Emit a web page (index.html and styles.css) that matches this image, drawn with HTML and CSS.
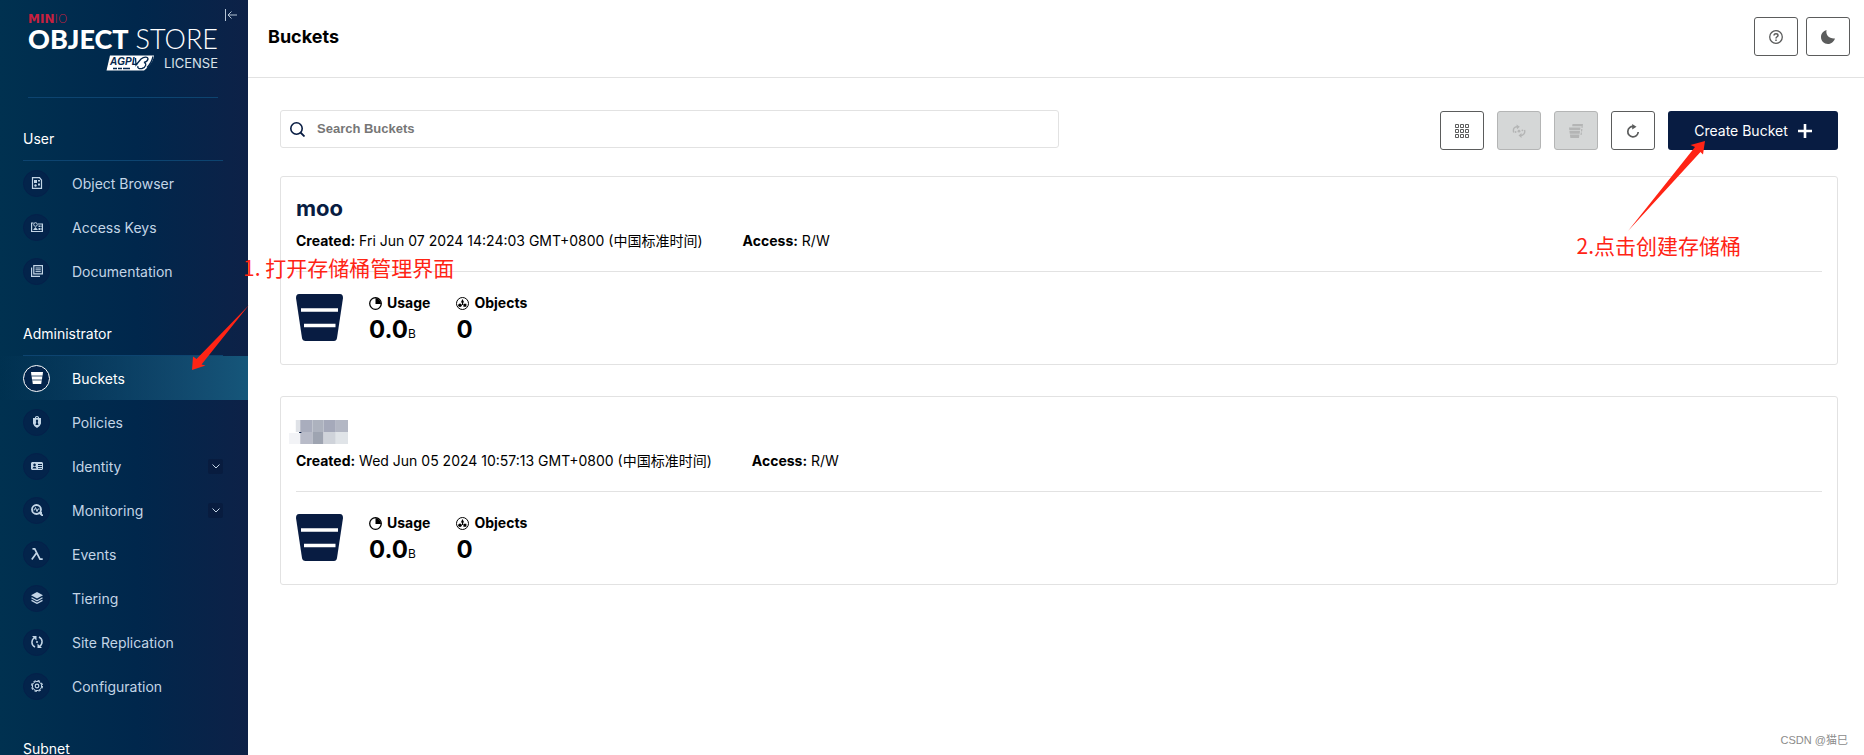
FILE: index.html
```html
<!DOCTYPE html>
<html lang="en">
<head>
<meta charset="utf-8">
<title>Buckets</title>
<link rel="stylesheet" href="styles.css">
</head>
<body>
<div class="app">
  <aside class="sidebar">
    <button class="collapse" aria-label="Collapse menu"><svg viewBox="0 0 12 12" width="12" height="12" fill="none" stroke="currentColor"><path d="M.5 0v12M12 6H3M6.500 2.500 3 6l3.500 3.500"/></svg></button>
    <div class="brand">
      <div class="brand-min"><b>MIN</b>IO</div>
      <div class="brand-name"><b>OBJECT</b><span>STORE</span></div>
      <div class="brand-license">
        <svg class="agpl" viewBox="0 0 49 16" width="49" height="16" aria-hidden="true">
          <path d="M4 .5h44c-.5 5-4 10-10 15H.5z" fill="#fff"/>
          <text x="4" y="10" class="agpl-text">AGPL</text>
          <path d="M7 13.500h4m1 0h4m1 0h7" stroke="#04264c" stroke-width="1.500"/>
          <path d="M29.500 3l.5 7 5-6c3-2.500 7-2.500 7 0-.5 2-2 3-4 3.500 3 .5 2 5-2 6-3 .5-5-.5-4-2.500M41 12.500c3-3 5-6 6-11" fill="none" stroke="#04264c" stroke-width="1.300"/>
        </svg>
        <span>LICENSE</span>
      </div>
    </div>
    <nav>
      <h2 class="group">User</h2>
      <a class="item" href="#"><span class="dot"><svg viewBox="0 0 12 12"><path d="M1.500.6h7L10.500 3v8.400h-9z" fill="none" stroke="currentColor" stroke-width="1.200"/><path d="M3 3h3v3H3zM7 6.500h2v2H7zM7 3h2v1.500H7z"/><circle cx="4.500" cy="8.500" r="1.200"/></svg></span>Object Browser</a>
      <a class="item" href="#"><span class="dot"><svg viewBox="0 0 12 12"><path d="M2.500 2H.6v8.500h10.800V3H7" fill="none" stroke="currentColor" stroke-width="1.200"/><circle cx="4.500" cy="3.500" r="1.800" fill="none" stroke="currentColor"/><path d="M2 9l2.500-3L7 9zM7.500 4.500H9V6H7.500zM9.500 4.500h1V6h-1zM7.500 7H9v2H7.500zM9.500 7h1v2h-1z"/></svg></span>Access Keys</a>
      <a class="item" href="#"><span class="dot"><svg viewBox="0 0 12 12" fill="none" stroke="currentColor"><path d="M2.800.6h8.600v8.200H2.800zM.6 2.500v8.900H9" stroke-width="1.200"/><path d="M4.500 3h5.300M4.500 4.800h5.300M4.500 6.600h5.300"/></svg></span>Documentation</a>
      <h2 class="group">Administrator</h2>
      <a class="item active" href="#" aria-current="page"><span class="dot"><svg viewBox="0 0 12 12"><path d="M0 0h12l-.4 3.500H.4zM.7 4.500h10.600l-.3 3H1zM1.300 8.500h9.400L10.200 12H1.800z"/><path d="M.5 3.500h11v1H.5zM1 7.500h10v1H1z" opacity=".5"/></svg></span>Buckets</a>
      <a class="item" href="#"><span class="dot"><svg viewBox="0 0 12 12"><path fill-rule="evenodd" d="M4 2V1q2-2 4 0v1h2v5.500Q9.500 10 6 12 2.500 10 2 7.500V2zm1 0h2V1.300H5zm1 1.500A1.500 1.500 0 0 0 5.300 6L4.500 9h3L6.700 6A1.500 1.500 0 0 0 6 3.500z"/></svg></span>Policies</a>
      <a class="item" href="#"><span class="dot"><svg viewBox="0 0 12 12"><path fill-rule="evenodd" d="M1 2h10l1 1v6l-1 1H1L0 9V3zm2.500 1.500a1.300 1.300 0 1 0 .1 0zM1.500 8.500h4Q5 6.500 3.500 6.500t-2 2zM7 4v1h4V4zm0 2v1h4V6zm0 2v.8h4V8z"/></svg></span>Identity<span class="chev"><svg viewBox="0 0 8 5" width="8" height="5"><path d="m.5.5 3.500 3.500L7.500.5" fill="none" stroke="currentColor"/></svg></span></a>
      <a class="item" href="#"><span class="dot"><svg viewBox="0 0 12 12"><circle cx="5.500" cy="5.500" r="4.500" fill="none" stroke="currentColor" stroke-width="1.800"/><path d="m8.500 9 3.500 3M7.500 9h3.500" stroke="currentColor" stroke-width="1.800"/><path d="M2.500 6h1l1-2.500L6 7.500 7 5h1.500" fill="none" stroke="currentColor"/></svg></span>Monitoring<span class="chev"><svg viewBox="0 0 8 5" width="8" height="5"><path d="m.5.5 3.500 3.500L7.500.5" fill="none" stroke="currentColor"/></svg></span></a>
      <a class="item" href="#"><span class="dot"><svg viewBox="0 0 12 12" fill="none" stroke="currentColor" stroke-width="1.700"><path d="M1.500.9h2.200L9 11.100h2.700M5.700 4.800.8 11.500"/></svg></span>Events</a>
      <a class="item" href="#"><span class="dot"><svg viewBox="0 0 12 12"><path d="m6 0 6 3.200-6 3.200-6-3.200z"/><path d="m.5 5.800 5.500 3 5.500-3M.5 8.400l5.500 3 5.500-3" fill="none" stroke="currentColor" stroke-width="1.200"/></svg></span>Tiering</a>
      <a class="item" href="#"><span class="dot"><svg viewBox="0 0 12 12"><path d="M4 11C0 9 0 4 3.500 1.500M8 1c4 2 4 7 .5 9.500" fill="none" stroke="currentColor" stroke-width="1.500"/><path d="M1 0h4.500v4.500zM11 12H6.500V7.500z"/><circle cx="6" cy="6" r="1"/></svg></span>Site Replication</a>
      <a class="item" href="#"><span class="dot"><svg viewBox="0 0 12 12" fill="none" stroke="currentColor"><circle cx="6" cy="6" r="4.600"/><circle cx="6" cy="6" r="5.400" stroke-width="1.200" stroke-dasharray="2.400 1.841"/><circle cx="6" cy="6" r="1.800" stroke-width="1.200"/></svg></span>Configuration</a>
      <h2 class="group">Subnet</h2>
    </nav>
  </aside>
  <main class="main">
    <header class="topbar">
      <h1>Buckets</h1>
      <div class="top-actions">
        <button class="icon-btn" aria-label="Help"><svg viewBox="0 0 14 14" width="14" height="14" fill="none" stroke="currentColor"><circle cx="7" cy="7" r="6.300" stroke-width="1.300"/><path d="M5 5.600C5 3 9 3.200 9 5.400 9 6.800 7 6.700 7 8.500M7 9.600v1.400" stroke-width="1.500"/></svg></button>
        <button class="icon-btn" aria-label="Dark mode"><svg viewBox="0 0 14 14" width="14" height="14"><path d="M5.500 0C4.500 5 8 9 14 8.500 12.500 12.500 9.500 14 7 14 3 14 0 11 0 7 0 3.500 2.500.8 5.500 0z"/></svg></button>
      </div>
    </header>
    <div class="content">
      <div class="toolbar">
        <div class="search">
          <svg viewBox="0 0 15 15" width="15" height="15" fill="none" stroke="currentColor"><circle cx="6.500" cy="6.500" r="5.700" stroke-width="1.600"/><path d="m10.500 10.500 4 4" stroke-width="1.800"/></svg>
          <input type="text" placeholder="Search Buckets" aria-label="Search Buckets">
        </div>
        <div class="tools">
          <button class="icon-btn" aria-label="Select buckets"><svg viewBox="0 0 14 14" width="14" height="14" fill="none" stroke="currentColor"><path d="M.5.5h3v3h-3zM5.500.5h3v3h-3zM10.500.5h3v3h-3zM.5 5.500h3v3h-3zM5.500 5.500h3v3h-3zM10.500 5.500h3v3h-3zM.5 10.500h3v3h-3zM5.500 10.500h3v3h-3zM10.500 10.500h3v3h-3z"/></svg></button>
          <button class="icon-btn" disabled aria-label="Set lifecycle"><svg viewBox="0 0 14 14" width="14" height="14"><path d="M1.800 8.500C.5 5 2.500 2.500 5.500 2.800M12.500 6c1 3-1 5.500-4 5.500" fill="none" stroke="currentColor" stroke-width="1.400"/><path d="M4.500.5 7.800 2.800 5 5.200zM9.500 9 6.500 11.500l3 2.500z"/><circle cx="7" cy="7.200" r="1.400"/><circle cx="3.600" cy="8" r=".9"/><circle cx="10.400" cy="6.300" r=".9"/></svg></button>
          <button class="icon-btn" disabled aria-label="Set replication"><svg viewBox="0 0 14 14" width="14" height="14"><path d="M3.500 0H14l-.5 4h-1l.2-1.800H3.200zM12.200 5h1.200l-.3 2.500H12zM11.800 8.500H13l-.4 2.500h-1.100z"/><path d="M0 3.500h11.500L11.200 6H.3zM.4 6.700h10.600l-.3 3H.8zM.9 10.400h9.500L10 14H1.400z"/></svg></button>
          <button class="icon-btn" aria-label="Refresh"><svg viewBox="0 0 14 14" width="14" height="14"><path d="M7.500 2.500A5.200 5.200 0 1 0 12.200 8" fill="none" stroke="currentColor" stroke-width="1.700"/><path d="M6.200 0 10.500 2.700 6.200 5.600z"/></svg></button>
          <button class="create">Create Bucket<svg viewBox="0 0 14 14" width="14" height="14"><path d="M7 0v14M0 7h14" stroke="currentColor" stroke-width="2.600"/></svg></button>
        </div>
      </div>

      <article class="card">
        <h2 class="name">moo</h2>
        <div class="meta"><span><b>Created:</b> Fri Jun 07 2024 14:24:03 GMT+0800 (中国标准时间)</span><span><b>Access:</b> R/W</span></div>
        <div class="stats">
          <svg class="bucket" viewBox="0 0 47 47" width="47" height="47"><path d="M3 0h41q3 0 3 4l-6 40q-.5 3-3 3H9.500q-3 0-3.500-3L0 4q0-4 3-4z" fill="#081c42"/><path d="M5 16h37M8 31.500h31.500" stroke="#fff" stroke-width="3.500"/></svg>
          <div class="stat"><div class="label"><svg viewBox="0 0 13 13" width="13" height="13"><circle cx="6.500" cy="6.500" r="5.800" fill="none" stroke="currentColor" stroke-width="1.300"/><path d="M6.500 1v6H12A6 6 0 0 0 6.500 1z"/></svg>Usage</div><div class="value">0.0<small>B</small></div></div>
          <div class="stat"><div class="label"><svg viewBox="0 0 13 13" width="13" height="13"><circle cx="6.500" cy="6.500" r="6" fill="none" stroke="currentColor"/><path d="m6.500 2 1.700 3.500H4.800z"/><circle cx="4" cy="8.300" r="1.800"/><path d="M7.400 6.700h3v3h-3zM6 5h1v3H6z"/></svg>Objects</div><div class="value">0</div></div>
        </div>
      </article>

      <article class="card">
        <div class="name masked"><svg viewBox="0 0 54 24" width="60" height="24" preserveAspectRatio="none" role="img" aria-label="Hidden bucket name"><path fill="#dfe2e7" d="M7 0h4v12H7z"/><path fill="#a9adbd" d="M11 0h11v12H11z"/><path fill="#adb2be" d="M22 0h10v12H22z"/><path fill="#a5a9ba" d="M32 0h11v12H32z"/><path fill="#b3b7c4" d="M43 0h11v12H43z"/><path fill="#f2f3f6" d="M1 13h10v11H1z"/><path fill="#b8bbc8" d="M11 12h11v12H11z"/><path fill="#9ea4b1" d="M22 12h10v12H22z"/><path fill="#cfd3da" d="M32 12h11v12H32z"/><path fill="#e0e4e8" d="M43 12h11v12H43z"/><path fill="#081c42" d="M10 12h2v1h-2z"/></svg></div>
        <div class="meta"><span><b>Created:</b> Wed Jun 05 2024 10:57:13 GMT+0800 (中国标准时间)</span><span><b>Access:</b> R/W</span></div>
        <div class="stats">
          <svg class="bucket" viewBox="0 0 47 47" width="47" height="47"><path d="M3 0h41q3 0 3 4l-6 40q-.5 3-3 3H9.500q-3 0-3.500-3L0 4q0-4 3-4z" fill="#081c42"/><path d="M5 16h37M8 31.500h31.500" stroke="#fff" stroke-width="3.500"/></svg>
          <div class="stat"><div class="label"><svg viewBox="0 0 13 13" width="13" height="13"><circle cx="6.500" cy="6.500" r="5.800" fill="none" stroke="currentColor" stroke-width="1.300"/><path d="M6.500 1v6H12A6 6 0 0 0 6.500 1z"/></svg>Usage</div><div class="value">0.0<small>B</small></div></div>
          <div class="stat"><div class="label"><svg viewBox="0 0 13 13" width="13" height="13"><circle cx="6.500" cy="6.500" r="6" fill="none" stroke="currentColor"/><path d="m6.500 2 1.700 3.500H4.800z"/><circle cx="4" cy="8.300" r="1.800"/><path d="M7.400 6.700h3v3h-3zM6 5h1v3H6z"/></svg>Objects</div><div class="value">0</div></div>
        </div>
      </article>
    </div>
  </main>

  <div class="note note-open">1. 打开存储桶管理界面</div>
  <svg class="arrow arrow-open" viewBox="0 0 57 65" width="57" height="65" aria-hidden="true"><path d="M57 0 4.500 54 1 51.500 0 65l13.500-4.500-4-1z"/></svg>
  <div class="note note-create">2.点击创建存储桶</div>
  <svg class="arrow arrow-create" viewBox="0 0 78 90" width="78" height="90" aria-hidden="true"><path d="M0 90 67 6l-4.500-2L77 0l-2 13.500-2.500-2.500z"/></svg>
  <div class="watermark">CSDN @猫巳</div>
</div>
</body>
</html>
```
FILE: styles.css
```css
* { box-sizing: border-box; }
body {
  margin: 0;
  font-family: Inter, "Noto Sans CJK SC", sans-serif;
  font-size: 14px;
  color: #000;
  background: #fff;
}
h1, h2 { margin: 0; }
button { font: inherit; padding: 0; cursor: pointer; }
svg { display: block; fill: currentColor; flex: none; }
svg[fill="none"] { fill: none; }

.app { position: relative; display: flex; height: 100vh; overflow: hidden; }

.sidebar {
  position: relative;
  flex: none;
  width: 248px;
  overflow: hidden;
  background: linear-gradient(90deg, #003150 0%, #00274c 55%, #0d2147 100%);
  color: #fff;
}
.collapse {
  position: absolute;
  top: 9px;
  right: 11px;
  border: 0;
  background: none;
  color: #b4c4d4;
}
.brand {
  height: 98px;
  margin: 0 30px 0 28px;
  padding-top: 13px;
  border-bottom: 1px solid #0d4470;
}
.brand-min {
  font: 200 12px/12px "DejaVu Sans", sans-serif;
  color: #c8203f;
}
.brand-min b { font-weight: 700; }
.brand-name {
  display: flex;
  justify-content: space-between;
  font: 300 27px/28px Lato, sans-serif;
}
.brand-name b { font-weight: 900; }
.brand-license {
  display: flex;
  justify-content: flex-end;
  align-items: center;
  gap: 9px;
  font-size: 13px;
  line-height: 20px;
  color: #dbe3ea;
}
.agpl-text { font: italic bold 10px "Liberation Sans", sans-serif; fill: #04264c; }

.group {
  margin: 0 25px 0 23px;
  padding: 30px 0 10px;
  border-bottom: 1px solid #0d4470;
  font-size: 14px;
  font-weight: 400;
  line-height: 22px;
}
.item {
  display: flex;
  align-items: center;
  height: 44px;
  padding: 0 25px 0 23px;
  color: #c3d5e6;
  text-decoration: none;
}
.dot {
  display: grid;
  place-items: center;
  width: 27px;
  height: 27px;
  margin-right: 22px;
  border: 1px solid #04204a;
  border-radius: 50%;
  background: #03244b;
}
.dot svg { width: 12px; height: 12px; }
.active {
  color: #fff;
  background: linear-gradient(90deg, #00315000 0%, #15567a 100%);
}
.active .dot { border-color: #fff; }
.chev {
  display: grid;
  place-items: center;
  width: 15px;
  height: 15px;
  margin-left: auto;
  border-radius: 2px;
  background: #081c3f;
}

.main { flex: 1; min-width: 0; }
.topbar {
  display: flex;
  justify-content: space-between;
  align-items: center;
  padding: 17px 14px 21px 20px;
  border-bottom: 1px solid #e2e2e2;
}
h1 { font-size: 18px; line-height: 22px; }
.top-actions { display: flex; gap: 8px; }
.icon-btn {
  display: grid;
  place-items: center;
  width: 44px;
  height: 39px;
  border: 1px solid #5b5c5c;
  border-radius: 3px;
  background: #fff;
  color: #5b5c5c;
}
.icon-btn:disabled { border-color: #b4b5b5; background: #d5d7d7; color: #b4b5b5; }

.content { padding: 32px 26px 32px 32px; }
.toolbar {
  display: flex;
  justify-content: space-between;
  align-items: flex-start;
  height: 40px;
  margin-bottom: 26px;
}
.search {
  display: flex;
  align-items: center;
  gap: 10px;
  width: 50%;
  height: 38px;
  padding: 0 9px;
  border: 1px solid #e2e2e2;
  border-radius: 3px;
  color: #081c42;
}
.search input {
  flex: 1;
  border: 0;
  outline: 0;
  font: bold 13px/20px "Liberation Sans", sans-serif;
}
.search input::placeholder { color: #767676; opacity: 1; }
.tools { display: flex; align-self: flex-end; gap: 13px; }
.create {
  display: flex;
  align-items: center;
  justify-content: center;
  gap: 10px;
  width: 170px;
  height: 39px;
  border: 0;
  border-radius: 3px;
  background: #081c42;
  color: #fff;
}

.card {
  margin-bottom: 31px;
  padding: 15px 15px 16px;
  border: 1px solid #e2e2e2;
  border-radius: 3px;
}
.name {
  height: 32px;
  font-size: 22px;
  line-height: 32px;
  color: #081c42;
}
.masked { display: flex; align-items: flex-end; margin-left: -8px; }
.meta {
  display: flex;
  gap: 40px;
  padding: 6px 0 19px;
  border-bottom: 1px solid #e2e2e2;
  line-height: 22px;
}
.stats {
  display: flex;
  align-items: flex-start;
  gap: 26px;
  padding-top: 22px;
}
.label {
  display: flex;
  align-items: center;
  gap: 5px;
  font-weight: 700;
  line-height: 18px;
}
.value { height: 36px; font-size: 24px; font-weight: 700; line-height: 36px; }
.value small { font-size: 12px; font-weight: 400; line-height: 12px; }

.note {
  position: absolute;
  font: 400 21px/26px "Noto Sans CJK SC", sans-serif;
  color: #ff2415;
  white-space: nowrap;
}
.arrow { position: absolute; fill: #ff2415; }
.note-open { left: 243px; top: 254px; }
.arrow-open { left: 192px; top: 305px; }
.note-create { right: 123px; top: 232px; }
.arrow-create { right: 158px; top: 141px; }
.watermark {
  position: absolute;
  right: 16px;
  bottom: 6px;
  font: 11px/18px "Liberation Sans", "Noto Sans CJK SC", sans-serif;
  color: #8b8b8b;
}
```
